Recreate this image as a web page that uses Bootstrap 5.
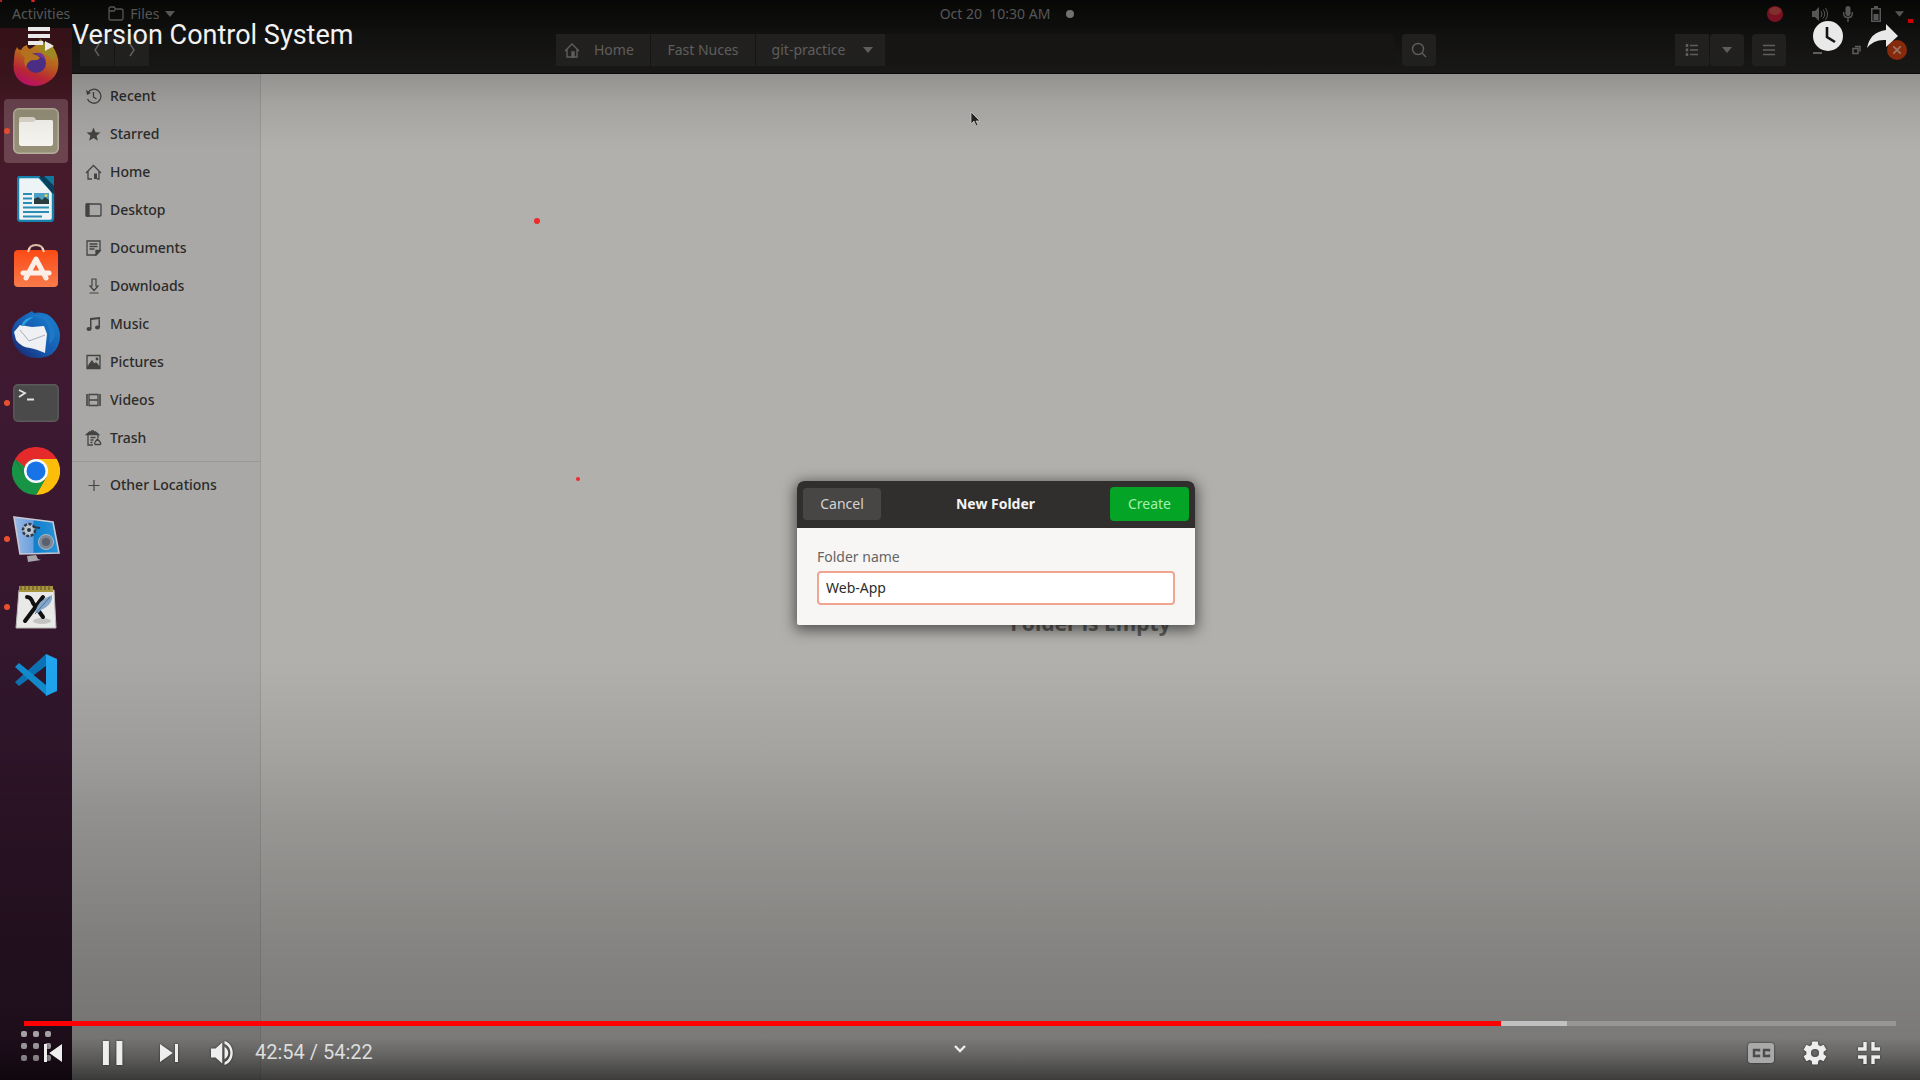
<!DOCTYPE html>
<html lang="en">
<head>
<meta charset="utf-8">
<meta name="viewport" content="width=device-width, initial-scale=1">
<title>Version Control System</title>
<link href="https://cdn.jsdelivr.net/npm/bootstrap@5.3.0/dist/css/bootstrap.min.css" rel="stylesheet">
<style>
  body { background: #000; font-family: "Noto Sans", "Open Sans", sans-serif; font-size: 14px; line-height: 20px; }
  svg { display: block; flex: none; }
  button { font-family: inherit; }
  .bare { background: none; border: 0; padding: 0; color: inherit; }

  /* desktop */
  .topbar { height: 28px; background: linear-gradient(#090908, #111110); color: #696969; }
  .topbar-side { flex: 1 1 0; }
  .app-menu { gap: 6px; margin-left: 38px; }
  .clock-text { padding-left: 110px; }
  .tray { padding-right: 16px; gap: 14px; }
  .tray-rec { margin-right: 14px; }
  .tray-battery { margin-left: 4px; }
  .dock { width: 72px; padding-top: 1px; background: linear-gradient(#3f151b, #481a28 90px, #3d1932 380px, #32162c 640px, #2a1426); }
  .dock-item { height: 68px; color: #fff; }
  .dock-item.running::before { content: ""; position: absolute; left: 4px; top: 31px; width: 6px; height: 6px; border-radius: 50%; background: #e8502e; }
  .dock-tile { width: 64px; height: 64px; border-radius: 4px; }
  .dock-item.current .dock-tile { background: #6b4450; }
  .apps-btn { margin-bottom: 18px; padding-left: 20px; }

  .headerbar { height: 46px; padding-bottom: 2px; background: linear-gradient(#131312, #1e1d1c); border-bottom: 1px solid #0b0b0b; color: #72716f; }
  .header-side { flex: 1 1 0; }
  .path-area { width: 880px; }
  .path-field { background: #1b1917; border-radius: 4px; }
  .hb { height: 32px; min-width: 34px; background: #282726; color: #72716f; border: 0; padding: 0 8px; display: flex; align-items: center; justify-content: center; border-radius: 4px; text-decoration: none; }
  .hb.seg { border-radius: 0; margin-right: 1px; }
  .hb.path-home { width: 94px; gap: 14px; justify-content: flex-start; }
  .path-mid { width: 104px; }
  .hb.path-last { width: 129px; gap: 18px; padding: 0 10px 0 14px; }
  .window-btns { gap: 30px; margin: 0 13px 0 27px; }
  .close-dot { width: 20px; height: 20px; margin-left: -4px; border-radius: 50%; background: #a2330f; color: #b98d7c; }

  .places { width: 189px; background: #a9a8a6; border-right: 1px solid #9b9a98; padding-top: 3px; font-weight: 500; }
  .places a { height: 38px; padding-left: 13px; gap: 8px; color: #2b2b2a; text-decoration: none; }
  .places a svg { color: #434342; }
  .places hr { margin: 4px 0; border-color: #999896; opacity: 1; }
  .folder-view { background: #b1b0ad; }
  .empty-note { padding-top: 92px; font-size: 21px; line-height: 28px; font-weight: 700; color: #5d5d5b; }

  .shade { inset: 0; pointer-events: none; background:
    linear-gradient(rgba(0,0,0,.18), rgba(0,0,0,.17) 74px, rgba(0,0,0,.07) 104px, rgba(0,0,0,0) 150px) top / 100% 150px no-repeat,
    linear-gradient(rgba(0,0,0,0), rgba(0,0,0,.08) 99px, rgba(0,0,0,.14) 154px, rgba(0,0,0,.19) 210px, rgba(0,0,0,.25) 284px, rgba(0,0,0,.31) 378px, rgba(0,0,0,.44) 396px, rgba(0,0,0,.66)) bottom / 100% 420px no-repeat; }

  /* new folder dialog */
  .dialog-layer { inset: 26px 0 0 72px; }
  .folder-dialog { width: 398px; border-radius: 7px 7px 2px 2px; background: #f7f6f5; box-shadow: 0 3px 14px 2px rgba(0,0,0,.55); overflow: hidden; }
  .dialog-head { height: 47px; background: #312f2e; color: #f4f4f3; padding: 0 6px 2px; }
  .btn-cancel, .btn-create { border: 0; border-radius: 4px; padding: 0; font-size: 14px; line-height: 20px; }
  .btn-cancel { width: 78px; height: 32px; background: #484645; color: #d4d3d2; }
  .btn-create { width: 79px; height: 34px; background: #04a527; color: #a2f0b2; }
  .dialog-body { padding: 19px 20px 20px; }
  .dialog-body label { color: #666564; margin-bottom: 4px; line-height: 20px; }
  .name-field { display: block; height: 34px; border: 2px solid #f0a592; border-radius: 4px; padding: 0 7px 2px; font-size: 14px; color: #2c2c2c; background: #fff; }

  /* player */
  .player { inset: 0; font-family: Roboto, sans-serif; color: #eee; pointer-events: none; }
  .player button, .player input { pointer-events: auto; }
  .player-top { padding: 15px 22px 0 28px; }
  .player-title { font-size: 27px; line-height: 40px; font-weight: 400; color: #f2f2f2; margin: 0 0 0 18px; }
  .list-btn { margin-top: 11px; }
  .later-btn { margin-top: 6px; }
  .share-btn { margin-top: 8px; }
  .seek { -webkit-appearance: none; appearance: none; display: block; width: calc(100% - 48px); height: 5px; margin: 0 24px;
    background: linear-gradient(90deg, #f00 var(--played), #c1c1c1 var(--played) var(--loaded), #979694 var(--loaded)); }
  .seek::-webkit-slider-thumb { -webkit-appearance: none; width: 0; height: 0; }
  .controls { height: 54px; padding: 0 24px 0 26px; }
  .controls-side { flex: 1 1 0; }
  .ctl { width: 54px; height: 54px; filter: drop-shadow(0 0 1px rgba(0,0,0,.6)); display: flex; align-items: center; justify-content: center; }
  .time { font-size: 20px; line-height: 24px; color: #ddd; margin-left: 5px; padding-bottom: 2px; }
  .expand { margin: 19px 0 0 -2px; }

  .spot { background: #ee2a2a; border-radius: 50%; }
  .spot-a { left: 534px; top: 218px; width: 6px; height: 6px; }
  .spot-b { left: 576px; top: 477px; width: 4px; height: 4px; }
  .spot-c { left: 0; top: 0; width: 2px; height: 2px; }
  .spot-d { left: 31px; top: 0; width: 4px; height: 2px; }
  .spot-e { right: 7px; top: 19px; width: 5px; height: 4px; border-radius: 0; background: #c00; }
  .pointer { left: 969px; top: 111px; }
</style>
<script src="https://cdn.jsdelivr.net/npm/bootstrap@5.3.0/dist/js/bootstrap.bundle.min.js"></script>
</head>
<body>
<div class="position-relative vh-100 overflow-hidden d-flex flex-column">

  <!-- desktop bar -->
  <header class="topbar d-flex align-items-center">
    <div class="topbar-side d-flex align-items-center">
      <button class="bare ms-2 ps-1">Activities</button>
      <button class="app-menu bare d-flex align-items-center">
        <svg width="16" height="16" viewBox="0 0 16 16" fill="none" stroke="currentColor" stroke-width="1.300"><path d="M1 12.500v-10Q1 1 2.500 1H6l1.500 2H13q2 0 2 2v7.500q0 1.500-1.500 1.500h-11Q1 14 1 12.500zM1 5h5l1.500-2"/></svg>
        Files
        <svg width="10" height="6" viewBox="0 0 10 6" fill="currentColor"><path d="M0 0h10L5 6z"/></svg>
      </button>
    </div>
    <div class="clock-text d-flex align-items-center">
      <span>Oct 20&nbsp; 10:30 AM</span>
      <svg class="ms-3" width="8" height="8" viewBox="0 0 8 8"><circle cx="4" cy="4" r="4" fill="#8a8a8a"/></svg>
    </div>
    <div class="tray topbar-side d-flex align-items-center justify-content-end">
      <svg class="tray-rec" width="16" height="16" viewBox="0 0 16 16"><circle cx="8" cy="8" r="8" fill="#93152a"/><ellipse cx="8" cy="5" rx="6" ry="4" fill="#9c3a36"/></svg>
      <svg width="18" height="16" viewBox="0 0 18 16" fill="currentColor"><path d="M1 5h3l4-4v14l-4-4H1z"/><path d="M10 5q2 3 0 6M12 3.500q3.500 4.500 0 9M14.500 2q4 6 0 12" fill="none" stroke="currentColor"/></svg>
      <svg width="10" height="16" viewBox="0 0 10 16" fill="currentColor"><rect x="2.500" width="5" height="10" rx="2.500"/><path d="M.8 6v2q0 3.500 4.200 3.500T9.200 8V6M5 12v4" fill="none" stroke="currentColor" stroke-width="1.400"/></svg>
      <svg class="tray-battery" width="10" height="16" viewBox="0 0 10 16" fill="currentColor"><path d="M3 0h4v2h3v14H0V2h3zM1.500 3.500v11h7v-11z" fill-rule="evenodd"/><path d="M2.500 8h5v6h-5z"/></svg>
      <svg width="9" height="6" viewBox="0 0 10 6" fill="currentColor"><path d="M0 0h10L5 6z"/></svg>
    </div>
  </header>

  <div class="d-flex flex-grow-1">
    <!-- dock -->
    <nav class="dock d-flex flex-column flex-shrink-0" aria-label="Dock">
      <button class="dock-item bare position-relative d-flex align-items-center justify-content-center" aria-label="Firefox">
        <svg width="46" height="48" viewBox="0 0 46 48">
          <defs>
            <linearGradient id="fx" x1=".75" y1="0" x2=".35" y2="1"><stop offset="0" stop-color="#d8b42a"/><stop offset=".45" stop-color="#dc7424"/><stop offset=".75" stop-color="#dd2f3e"/><stop offset="1" stop-color="#d41277"/></linearGradient>
          </defs>
          <path d="M4 8q1 3 4 3 2-4 6-5 0 3 3 4 6-3 10-9 4 1 6 6 3-1 4-3 6 7 8 16 2 13-6 20t-17 7Q11 47 5 40T1 21Q1 13 4 8z" fill="url(#fx)"/>
          <path d="M27 0q-3 5 0 11 4 5 10 6l4 5q2-8-3-14-5-3-11-8z" fill="#b9a52a"/>
          <circle cx="23" cy="24" r="10" fill="#5a379f"/>
          <path d="M7 12q8-2 13 3 5 1 7 4-2 3-8 2-5 2-6 7-3-5-1-9-3-2-5-7z" fill="#d98a24"/>
          <path d="M23 14q8-2 10 8-3-4-8-5z" fill="#8a3fb0"/>
        </svg>
      </button>
      <button class="dock-item current running bare position-relative d-flex align-items-center justify-content-center" aria-label="Files">
        <span class="dock-tile d-flex align-items-center justify-content-center">
          <svg width="46" height="46" viewBox="0 0 46 46"><rect x=".8" y=".8" width="44.400" height="44.400" rx="5" fill="#969079" stroke="#b5af9c" stroke-width="1.600"/><path d="M6 11q0-2 2-2h12q2 0 3 3h15q2 0 2 2v21q0 3-3 3H9q-3 0-3-3z" fill="#dcd6ca"/><path d="M6 16q0-2 2-2h12l3-2h15q2 0 2 2v21q0 3-3 3H9q-3 0-3-3z" fill="#f7f5f0"/></svg>
        </span>
      </button>
      <button class="dock-item bare position-relative d-flex align-items-center justify-content-center" aria-label="LibreOffice Writer">
        <svg width="38" height="46" viewBox="0 0 38 46"><path d="M3 1h19l14 15v26q0 3-3 3H4q-3 0-3-3V4q0-3 2-3z" fill="#eef4f6" stroke="#1682ad" stroke-width="2.400"/><path d="M22 1h6l9 9v8l-2-1z" fill="#083f5c"/><path d="M27 0h10v10z" fill="#1377a0"/><path d="M6 18h9M6 22.500h9M6 27h9M6 31.500h26M6 36h26M6 40.500h19" stroke="#2b8db5" stroke-width="2"/><path d="M17 17h15v11H17z" fill="#4c9fc5"/><path d="M17 28v-5l4-2 4 3 3-3 4 3v4z" fill="#2b3c3e"/><circle cx="29" cy="19.500" r="1.500" fill="#dccf55"/></svg>
      </button>
      <button class="dock-item bare position-relative d-flex align-items-center justify-content-center" aria-label="Ubuntu Software">
        <svg width="46" height="46" viewBox="0 0 46 46"><defs><linearGradient id="sw" x1="0" y1="0" x2="0" y2="1"><stop offset="0" stop-color="#fb4a14"/><stop offset="1" stop-color="#f97b4b"/></linearGradient></defs><path d="M15 8q1-7 8-7t8 7" fill="none" stroke="#d8bfa4" stroke-width="2"/><rect x="1" y="6" width="44" height="37" rx="4" fill="url(#sw)"/><path d="M13 34l10-19 10 19M10 29h26" fill="none" stroke="#fbefe7" stroke-width="5" stroke-linecap="round" stroke-linejoin="round"/><path d="M15 8q1-3 2-4M31 8q-1-3-2-4" stroke="#f4d7c5" stroke-width="2"/></svg>
      </button>
      <button class="dock-item bare position-relative d-flex align-items-center justify-content-center" aria-label="Thunderbird">
        <svg width="48" height="48" viewBox="0 0 48 48"><defs><linearGradient id="tb" x1="1" y1="0" x2="0" y2="1"><stop offset="0" stop-color="#1787d8"/><stop offset=".6" stop-color="#1656aa"/><stop offset="1" stop-color="#1a1c62"/></linearGradient></defs><path d="M11 5l9-5 2 2q12-2 19 6 7 8 7 17 0 11-8 18-6 4-15 4-13 0-20-9-6-8-5-19 1-8 11-14z" fill="url(#tb)"/><path d="M12 6q10-3 19 2 9 7 6 25 5-3 6-10-2-16-15-19-9-1-16 2z" fill="#1f78c6"/><path d="M8 14l12 2 12-1 3 8-1 9-1 10q-9-4-15-5-9-1-14-8l-2-8z" fill="#eef0f3"/><path d="M8 19l9 11 16-6" fill="none" stroke="#a9adb6"/><path d="M9 15q3-9 13-9-8 4-10 9z" fill="#2aa0dd"/></svg>
      </button>
      <button class="dock-item running bare position-relative d-flex align-items-center justify-content-center" aria-label="Terminal">
        <svg width="46" height="38" viewBox="0 0 46 38"><rect x=".8" y=".8" width="44.400" height="36.400" rx="4" fill="#4b4a4a" stroke="#5c5a59" stroke-width="1.400"/><path d="M6 6l6 3-6 4M14 15.500h7" fill="none" stroke="#e2e2e2" stroke-width="1.800"/></svg>
      </button>
      <button class="dock-item bare position-relative d-flex align-items-center justify-content-center" aria-label="Chrome">
        <svg width="48" height="48" viewBox="0 0 48 48"><path d="M24 24L3.200 12A24 24 0 0 1 44.800 12z" fill="#e52a2b"/><path d="M24 12h20.800A24 24 0 0 1 24 48l10.400-18z" fill="#fdbd0b"/><path d="M3.200 12A24 24 0 0 0 24 48l10.400-18-10.400 4-10.400-4z" fill="#179544"/><path d="M3.200 12L13.600 30 20 18l4-6z" fill="#179544"/><path d="M3.200 12L8 7l16 5h20.800-20.800a12 12 0 0 0-11 8z" fill="#e52a2b"/><circle cx="24" cy="24" r="12" fill="#f6f8fa"/><circle cx="24" cy="24" r="9.500" fill="#1873e6"/></svg>
      </button>
      <button class="dock-item running bare position-relative d-flex align-items-center justify-content-center" aria-label="Screen recorder">
        <svg width="48" height="46" viewBox="0 0 48 46"><defs><linearGradient id="sr"><stop offset="0" stop-color="#9bbbe6"/><stop offset=".42" stop-color="#6a9fdc"/><stop offset=".45" stop-color="#1180cc"/><stop offset="1" stop-color="#2b93da"/></linearGradient></defs><path d="M2 1l39 5 6 31-39 1z" fill="url(#sr)" stroke="#c6c8d4" stroke-width="1.600"/><circle cx="17" cy="14" r="6" fill="#bcc6d3" stroke="#333b49" stroke-width="2.500" stroke-dasharray="3 1.500"/><circle cx="17" cy="14" r="2" fill="#2d3544"/><path d="M21 11l7 1" stroke="#2d3544" stroke-width="2"/><circle cx="34" cy="26" r="7.500" fill="#7d8894" stroke="#b1bac4"/><circle cx="34" cy="26" r="4" fill="#58616d"/><path d="M15 40l9-1 2 4 3 1-13 2z" fill="#a8a6a8"/></svg>
      </button>
      <button class="dock-item running bare position-relative d-flex align-items-center justify-content-center" aria-label="Xournal">
        <svg width="42" height="44" viewBox="0 0 42 44"><path d="M4 5h35l2 38H1z" fill="#e9e9e7" stroke="#b9b8b6"/><ellipse cx="27" cy="36" rx="9" ry="3" fill="#c3c3c1"/><path d="M4 1h34v6H4z" fill="#a8953f"/><path d="M6 0v5M10 0v5M14 0v5M18 0v5M22 0v5M26 0v5M30 0v5M34 0v5" stroke="#594b1f"/><path d="M12 12q4 0 6 6l10 14" fill="none" stroke="#111" stroke-width="4" stroke-linecap="round"/><path d="M28 12L10 36" stroke="#111" stroke-width="4" stroke-linecap="round"/><path d="M20 27q3-12 17-17 1 8-7 13-4 1-7 5z" fill="#86a8cb"/><path d="M20 29q8-9 15-17" stroke="#4b6d92" fill="none"/></svg>
      </button>
      <button class="dock-item bare position-relative d-flex align-items-center justify-content-center" aria-label="Visual Studio Code">
        <svg width="44" height="44" viewBox="0 0 44 44"><path d="M1 29l4 4 27-20V1z" fill="#0c72b4"/><path d="M1 14l4-4 28 23v10z" fill="#118ccf"/><path d="M32 1l11 5v32l-11 5z" fill="#20a5ee"/></svg>
      </button>
      <button class="apps-btn bare mt-auto d-flex" aria-label="Show Applications">
        <svg width="32" height="32" viewBox="0 0 32 32" fill="#f0e8ee"><rect x="1" y="1" width="6" height="6" rx="2"/><rect x="13" y="1" width="6" height="6" rx="2"/><rect x="25" y="1" width="6" height="6" rx="2"/><rect x="1" y="13" width="6" height="6" rx="2"/><rect x="13" y="13" width="6" height="6" rx="2"/><rect x="25" y="13" width="6" height="6" rx="2"/><rect x="1" y="25" width="6" height="6" rx="2"/><rect x="13" y="25" width="6" height="6" rx="2"/><rect x="25" y="25" width="6" height="6" rx="2"/></svg>
      </button>
    </nav>

    <!-- file manager window -->
    <div class="flex-grow-1 d-flex flex-column">
      <div class="headerbar d-flex align-items-center">
        <div class="header-side d-flex">
          <button class="hb seg ms-2" aria-label="Back"><svg width="8" height="14" viewBox="0 0 8 14" fill="none" stroke="currentColor" stroke-width="1.500"><path d="M6 1L2 7l4 6"/></svg></button>
          <button class="hb seg" aria-label="Forward"><svg width="8" height="14" viewBox="0 0 8 14" fill="none" stroke="currentColor" stroke-width="1.500"><path d="M2 1l4 6-4 6"/></svg></button>
        </div>
        <div class="path-area d-flex gap-2">
          <div class="path-field d-flex flex-grow-1">
            <a href="#" class="hb seg path-home"><svg width="16" height="16" viewBox="0 0 16 16" fill="none" stroke="currentColor" stroke-width="1.400"><path d="M1 9l7-7 7 7M3 7.500V15h10V7.500"/><path d="M8 10h2v5H8z" fill="currentColor"/></svg>Home</a>
            <a href="#" class="hb seg path-mid">Fast Nuces</a>
            <a href="#" class="hb seg path-last">git-practice<svg width="10" height="6" viewBox="0 0 10 6" fill="currentColor"><path d="M0 0h10L5 6z"/></svg></a>
          </div>
          <button class="hb" aria-label="Search"><svg width="16" height="16" viewBox="0 0 16 16" fill="none" stroke="currentColor" stroke-width="1.400"><circle cx="7" cy="7" r="5.500"/><path d="M11 11l4 4"/></svg></button>
        </div>
        <div class="header-side d-flex align-items-center justify-content-end">
          <button class="hb seg" aria-label="List view"><svg width="14" height="14" viewBox="0 0 14 14" fill="none" stroke="currentColor"><path d="M2 1v12" stroke-width="2.500" stroke-dasharray="3 1.500"/><path d="M5 2.500h8M5 7h8M5 11.500h8" stroke-width="1.500"/></svg></button>
          <button class="hb" aria-label="View options"><svg width="10" height="6" viewBox="0 0 10 6" fill="currentColor"><path d="M0 0h10L5 6z"/></svg></button>
          <button class="hb ms-2" aria-label="Menu"><svg width="12" height="12" viewBox="0 0 12 12" stroke="currentColor" stroke-width="1.500"><path d="M0 1.500h12M0 6h12M0 10.500h12"/></svg></button>
          <div class="window-btns d-flex align-items-center">
            <button class="bare" aria-label="Minimize"><svg width="9" height="10" viewBox="0 0 9 10" stroke="currentColor" stroke-width="2"><path d="M0 8h9"/></svg></button>
            <button class="bare" aria-label="Restore"><svg width="9" height="10" viewBox="0 0 9 10" fill="none" stroke="currentColor" stroke-width="1.500"><path d="M1 3.500h5v5H1zM3 1.500h5v5"/></svg></button>
            <button class="close-dot border-0 p-0 d-flex align-items-center justify-content-center" aria-label="Close"><svg width="8" height="8" viewBox="0 0 8 8" stroke="currentColor" stroke-width="1.600"><path d="M0 0l8 8M8 0L0 8"/></svg></button>
          </div>
        </div>
      </div>
      <div class="d-flex flex-grow-1">
        <nav class="places d-flex flex-column flex-shrink-0" aria-label="Places">
          <a href="#" class="d-flex align-items-center"><svg width="17" height="16" viewBox="0 0 17 16" fill="none" stroke="currentColor" stroke-width="1.300"><path d="M3 4.500A7 7 0 1 1 2.500 11M8.500 4v5l3 2"/><path d="M1 2l1 5 4-2z" fill="currentColor" stroke="none"/></svg>Recent</a>
          <a href="#" class="d-flex align-items-center"><svg width="17" height="16" viewBox="0 0 17 16" fill="currentColor"><path d="M8.500 1.500l2 4.700 5 .4-3.900 3.200 1.300 4.900-4.400-2.700-4.400 2.700 1.300-4.900L1.500 6.600l5-.4z"/></svg>Starred</a>
          <a href="#" class="d-flex align-items-center"><svg width="17" height="16" viewBox="0 0 17 16" fill="none" stroke="currentColor" stroke-width="1.300"><path d="M1 9l7.500-7.500L16 9M3 7.500V15h4M14 7.500V15h-2"/><path d="M9 9.500h3V15H9z" fill="currentColor" stroke="none"/></svg>Home</a>
          <a href="#" class="d-flex align-items-center"><svg width="17" height="16" viewBox="0 0 17 16" fill="none" stroke="currentColor" stroke-width="1.300"><rect x="1" y="2" width="15" height="12" rx="1"/><path d="M1.500 2H4v12H1.500z" fill="currentColor"/></svg>Desktop</a>
          <a href="#" class="d-flex align-items-center"><svg width="17" height="16" viewBox="0 0 17 16" fill="none" stroke="currentColor" stroke-width="1.300"><path d="M2 1h13v10l-4 4H2zM4.500 4h8M4.500 6.500h8M4.500 9h5"/><path d="M15 10.500h-4V15z" fill="currentColor"/></svg>Documents</a>
          <a href="#" class="d-flex align-items-center"><svg width="17" height="16" viewBox="0 0 17 16" fill="none" stroke="currentColor" stroke-width="1.200"><path d="M7 1h4v7h2l-4 4.500L5 8h2zM4.500 15h9"/></svg>Downloads</a>
          <a href="#" class="d-flex align-items-center"><svg width="17" height="16" viewBox="0 0 17 16" fill="currentColor"><path d="M5 2l10-1v2L6.500 4v9H5zM13.500 2H15v9h-1.500z"/><ellipse cx="4" cy="13" rx="2.500" ry="2"/><ellipse cx="12.500" cy="11.500" rx="2.500" ry="2"/></svg>Music</a>
          <a href="#" class="d-flex align-items-center"><svg width="17" height="16" viewBox="0 0 17 16" fill="none" stroke="currentColor" stroke-width="1.300"><path d="M2 1.500h13v13H2z"/><path d="M4 12v-1l3-4 2 3 2-1 2 2v1z" fill="currentColor"/><path d="M2 13h13" stroke-width="2.500"/><circle cx="12" cy="5" r=".8" fill="currentColor"/></svg>Pictures</a>
          <a href="#" class="d-flex align-items-center"><svg width="17" height="16" viewBox="0 0 17 16" fill="none" stroke="currentColor" stroke-width="1.300"><path d="M4 2.500h9v11H4zM4 8h9"/><path d="M2 2v12M15 2v12" stroke-width="1.600"/></svg>Videos</a>
          <a href="#" class="d-flex align-items-center"><svg width="17" height="16" viewBox="0 0 17 16" fill="none" stroke="currentColor" stroke-width="1.300"><path d="M1.500 4.500l3-2.500h6l3 2.500z" fill="currentColor"/><path d="M3 5v10h5M13 5v3M5.500 7.500h5M5.500 10h3M5.500 12.500h2M6 1h3"/><path d="M10 14.500q-1-1.500.500-3L12.500 9l2.500 3q1.500 1.500 0 2.500z"/></svg>Trash</a>
          <hr>
          <a href="#" class="d-flex align-items-center"><svg width="17" height="16" viewBox="0 0 17 16" stroke="currentColor" stroke-width="1.200"><path d="M9 3v11M3.500 8.500h11"/></svg>Other Locations</a>
        </nav>
        <main class="folder-view flex-grow-1 d-flex align-items-center justify-content-center">
          <p class="empty-note mb-0">Folder is Empty</p>
        </main>
      </div>
    </div>
  </div>

  <div class="shade position-absolute"></div>

  <div class="dialog-layer position-absolute d-flex align-items-center justify-content-center">
    <form class="folder-dialog" role="dialog" aria-labelledby="dialogTitle">
      <div class="dialog-head d-flex align-items-center justify-content-between">
        <button type="button" class="btn btn-cancel">Cancel</button>
        <strong id="dialogTitle">New Folder</strong>
        <button type="button" class="btn btn-create">Create</button>
      </div>
      <div class="dialog-body">
        <label for="folderName" class="d-block">Folder name</label>
        <input id="folderName" class="name-field w-100" type="text" value="Web-App">
      </div>
    </form>
  </div>

  <svg class="pointer position-absolute" width="12" height="16" viewBox="0 0 12 16"><path d="M2 1v12l3-3 2 5 2-1-2-4h4z" fill="#222" stroke="#c9c8c6" stroke-width=".8"/></svg>
  <i class="spot spot-a position-absolute"></i>
  <i class="spot spot-b position-absolute"></i>
  <i class="spot spot-c position-absolute"></i>
  <i class="spot spot-d position-absolute"></i>
  <i class="spot spot-e position-absolute"></i>

  <!-- video player chrome -->
  <div class="player position-absolute d-flex flex-column justify-content-between">
    <div class="player-top d-flex align-items-start">
      <button class="list-btn bare" aria-label="Playlist"><svg width="26" height="26" viewBox="0 0 26 26" fill="#e9e9e9"><path d="M0 1h22v4H0zM0 8h22v4H0zM0 15h15v4H0zM17 15l9 5-9 5z"/></svg></button>
      <h1 class="player-title">Version Control System</h1>
      <button class="later-btn bare ms-auto" aria-label="Watch later"><svg width="30" height="30" viewBox="0 0 30 30"><circle cx="15" cy="15" r="15" fill="#e9e9e9"/><path d="M14 6v10l8 5" fill="none" stroke="#151515" stroke-width="2.600"/></svg></button>
      <button class="share-btn bare ms-4" aria-label="Share"><svg width="31" height="26" viewBox="0 0 31 26" fill="#e9e9e9"><path d="M19 1l12 12-12 11v-7Q7 16 0 25 3 9 19 7z"/></svg></button>
    </div>
    <div>
      <input class="seek" type="range" min="0" max="3262" value="2574" aria-label="Seek" style="--played:78.9%;--loaded:82.45%">
      <div class="controls d-flex">
        <div class="controls-side d-flex align-items-center">
          <button class="ctl bare" aria-label="Previous"><svg width="54" height="54" viewBox="0 0 36 36" fill="#eee"><path d="M12 12h2v12h-2zM15.500 18l8.500 6V12z"/></svg></button>
          <button class="ctl bare ms-1" aria-label="Pause"><svg width="54" height="54" viewBox="0 0 36 36" fill="#eee"><path d="M12.600 26h4V10h-4zM21.600 26h4V10h-4z"/></svg></button>
          <button class="ctl bare ms-1" aria-label="Next"><svg width="54" height="54" viewBox="0 0 36 36" fill="#eee"><path d="M12 24l8.500-6L12 12zM22 12v12h2V12z"/></svg></button>
          <button class="ctl bare" aria-label="Mute"><svg width="54" height="54" viewBox="0 0 36 36" fill="#eee"><path d="M10 21h3l4.500 4v-14L13 15h-3zM19 14v8c1.500-.7 2.500-2.200 2.500-4s-1-3.300-2.500-4zM19 10c3.500 1 5.500 4.300 5.500 8s-2 7-5.500 8v-1.900c2.300-1 3.900-3.300 3.900-6.100s-1.600-5.100-3.900-6.100z"/></svg></button>
          <span class="time">42:54 / 54:22</span>
        </div>
        <button class="expand bare align-self-start" aria-label="More videos"><svg width="12" height="8" viewBox="0 0 12 8" fill="none" stroke="#eee" stroke-width="2.400"><path d="M1 1l5 5 5-5"/></svg></button>
        <div class="controls-side d-flex justify-content-end">
          <button class="ctl bare" aria-label="Captions"><svg width="26" height="20" viewBox="0 0 26 20"><rect width="26" height="20" rx="3" fill="#a9a9a9"/><path d="M11 8.500V7H6v6h5v-1.500M21 8.500V7h-5v6h5v-1.500" fill="none" stroke="#4c4c4c" stroke-width="2.400"/></svg></button>
          <button class="ctl bare" aria-label="Settings"><svg width="52" height="52" viewBox="0 0 36 36" fill="#eee"><path d="m23.940 18.780c.03-.25.05-.51.05-.78 0-.27-.02-.52-.05-.78l1.680-1.320c.15-.12.19-.33.09-.51l-1.600-2.760c-.09-.17-.31-.24-.48-.17l-1.990.8c-.41-.32-.86-.58-1.350-.78l-.3-2.120c-.02-.19-.19-.33-.39-.33h-3.200c-.2 0-.36.14-.39.33l-.3 2.120c-.48.2-.93.47-1.350.78l-1.990-.8c-.18-.07-.39 0-.48.17l-1.600 2.760c-.1.17-.05.39.09.51l1.680 1.320c-.03.25-.05.52-.05.78 0 .26.02.52.05.78l-1.680 1.320c-.15.12-.19.33-.09.51l1.600 2.760c.09.17.31.24.48.17l1.990-.8c.41.32.86.58 1.350.78l.3 2.120c.02.19.19.33.39.33h3.200c.2 0 .36-.14.39-.33l.3-2.120c.48-.2.93-.47 1.350-.78l1.990.8c.18.07.39 0 .48-.17l1.600-2.760c.09-.17.05-.39-.09-.51zM18 20.800a2.800 2.800 0 1 1 0-5.600 2.800 2.800 0 0 1 0 5.600z"/></svg></button>
          <button class="ctl bare" aria-label="Exit full screen"><svg width="22" height="22" viewBox="0 0 22 22" fill="none" stroke="#eee" stroke-width="3.400"><path d="M0 7h7V0M15 0v7h7M22 15h-7v7M7 22v-7H0"/></svg></button>
        </div>
      </div>
    </div>
  </div>
</div>
</body>
</html>
